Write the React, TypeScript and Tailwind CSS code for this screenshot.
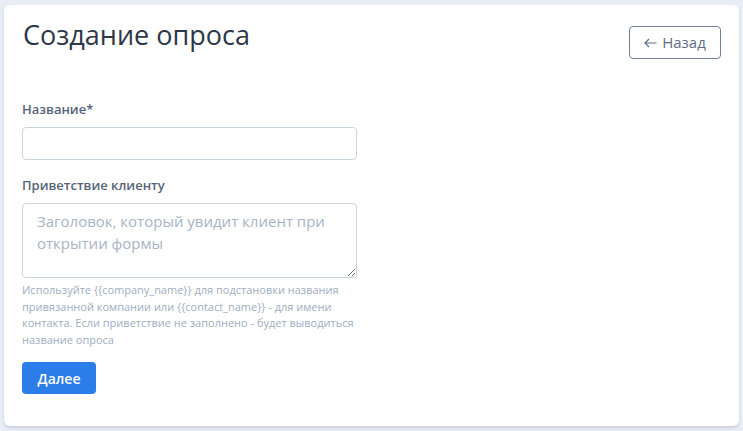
export default function App() {
  return (
    <div
      className="h-[431px] w-[743px] bg-[#e9edf5] px-[4px] pt-[5px]"
      style={{ fontFamily: '"Open Sans", "Noto Sans", sans-serif' }}
    >
      <div className="h-[421px] rounded-md bg-white px-[18px] pt-[10px] shadow-[0_2px_3px_rgba(160,170,190,0.45)]">
        {/* Header */}
        <div className="flex items-start justify-between">
          <h1 className="ml-px text-[27px] leading-[40px] text-[#2d3748]">Создание опроса</h1>
          <button className="mt-[11px] flex h-[33px] w-[92px] items-center justify-center gap-[5px] rounded border border-[#718096] text-[15px] text-[#5f6f84]">
            <svg width="13" height="10" viewBox="0 0 13 10" fill="none" stroke="currentColor" strokeWidth="1.2">
              <path d="M12.5 5H1M5 1L1 5l4 4" />
            </svg>
            Назад
          </button>
        </div>

        {/* Form */}
        <div className="mt-[41px] w-[335px]">
          <label className="block text-[13px] font-semibold leading-[18px] text-[#566377]">Название*</label>
          <input className="mt-[9px] block h-[33px] w-full rounded border border-[#cbd5e0] px-3 text-[14px]" />

          <label className="mt-[16px] block text-[13px] font-semibold leading-[18px] text-[#566377]">
            Приветствие клиенту
          </label>
          <textarea
            className="mt-[9px] block h-[75px] w-full rounded border border-[#cbd5e0] px-[14px] py-[6px] text-[15px] leading-[22px] placeholder:text-[#a9b4c4]"
            placeholder="Заголовок, который увидит клиент при открытии формы"
          />
          <p className="mt-[4px] text-[11px] leading-[16.5px] text-[#a0aec0]">
            Используйте {"{{company_name}}"} для подстановки названия привязанной компании или {"{{contact_name}}"} - для
            имени контакта. Если приветствие не заполнено - будет выводиться название опроса
          </p>

          <button className="mt-[14px] h-[32px] w-[74px] rounded bg-[#2b7de9] text-[14px] font-semibold text-white">
            Далее
          </button>
        </div>
      </div>
    </div>
  );
}
